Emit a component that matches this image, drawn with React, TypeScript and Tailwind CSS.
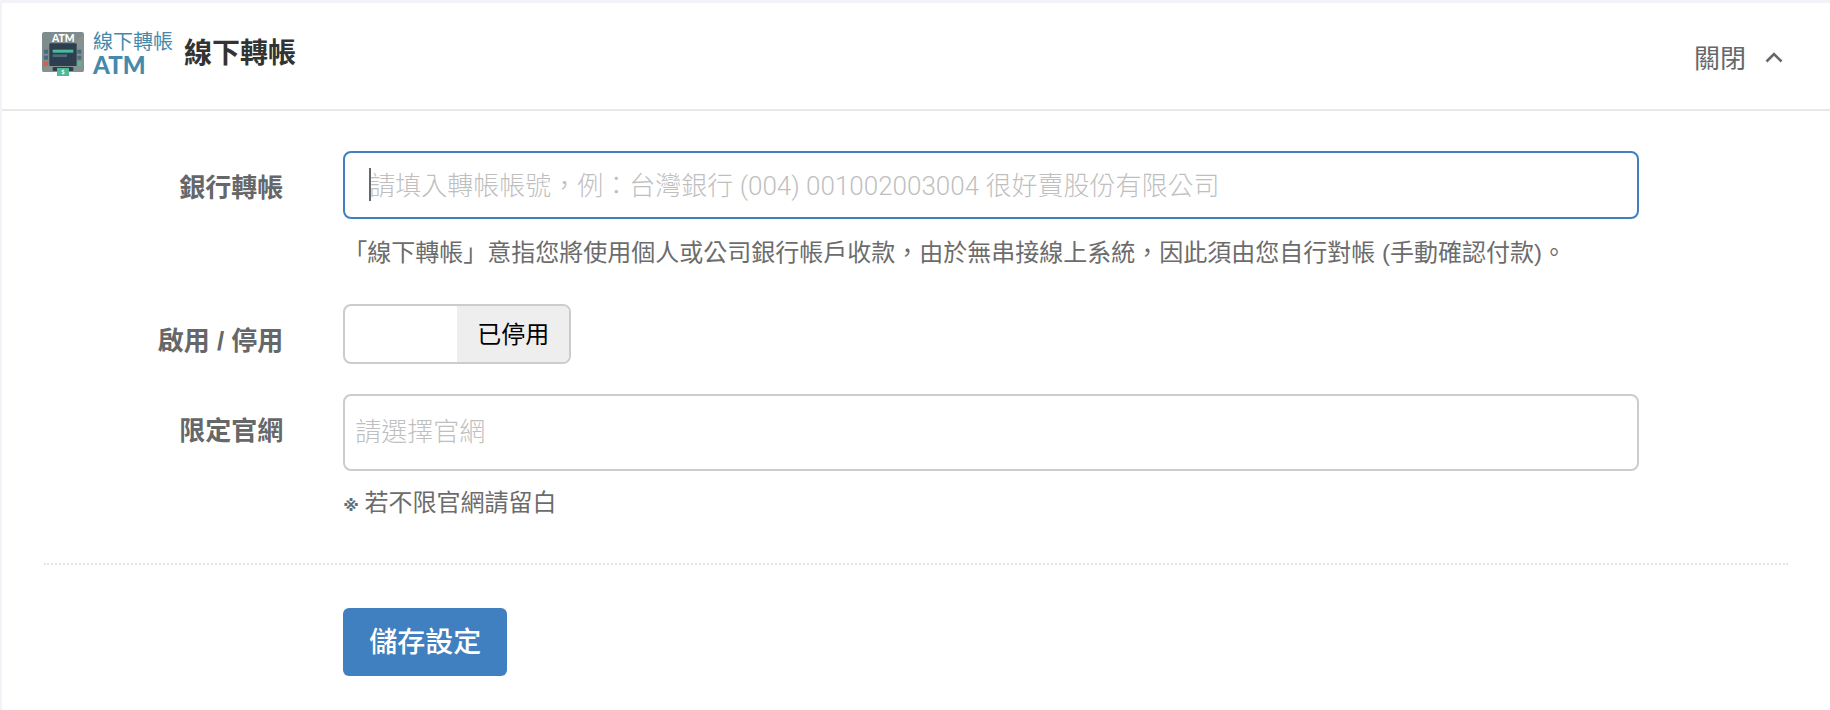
import { useState, type ReactNode } from 'react';

function AtmIcon() {
  return (
    <svg viewBox="0 0 126 132" className="h-11 w-[42px]" aria-hidden="true">
      <rect x="0" y="0" width="126" height="120" rx="7" fill="#7f8c8d" />
      <path d="M0 113 L126 7 V113 a7 7 0 0 1 -7 7 H7 a7 7 0 0 1 -7 -7Z" fill="#87918f" />
      <text
        x="64"
        y="29"
        textAnchor="middle"
        fontSize="31"
        fontWeight="900"
        fill="#ffffff"
        fontFamily="Lato, sans-serif"
      >
        ATM
      </text>
      <rect x="22" y="34" width="82" height="68" rx="3" fill="#2c3e50" />
      <rect x="32" y="53" width="62" height="9" fill="#4fba98" />
      <rect x="32" y="67" width="43" height="8" fill="#4c6d7c" />
      <rect x="6" y="53" width="12" height="12" fill="#496b7c" />
      <rect x="6" y="71" width="12" height="12" fill="#496b7c" />
      <rect x="6" y="89" width="12" height="12" fill="#d95b4e" />
      <rect x="106" y="53" width="12" height="12" fill="#496b7c" />
      <rect x="106" y="71" width="12" height="12" fill="#496b7c" />
      <rect x="106" y="89" width="12" height="12" fill="#4fba98" />
      <rect x="32" y="105" width="62" height="12" rx="3" fill="#2c3e50" />
      <rect x="45" y="108" width="36" height="24" fill="#4fba98" />
      <text
        x="63"
        y="126"
        textAnchor="middle"
        fontSize="17"
        fontWeight="700"
        fill="#ffffff"
        fontFamily="Lato, sans-serif"
      >
        $
      </text>
    </svg>
  );
}

function FormRow({ label, htmlFor, children }: {
  label?: string;
  htmlFor?: string;
  children: ReactNode;
}) {
  return (
    <div className="grid grid-cols-12 px-[10px]">
      <div className="col-span-2 pt-[19px] pr-[30px] text-right">
        {label && (
          <label htmlFor={htmlFor} className="text-[26px] leading-9 font-bold whitespace-nowrap">
            {label}
          </label>
        )}
      </div>
      <div className="col-span-9 px-[30px]">{children}</div>
    </div>
  );
}

export default function App() {
  const [enabled, setEnabled] = useState(false);
  const [open, setOpen] = useState(true);

  return (
    <div className="flex min-h-screen flex-col bg-[#f2f2f9] pt-[3px] pl-[2px] font-['Liberation_Sans','Noto_Sans_CJK_TC',sans-serif] text-[#666769]">
      <section className="flex-1 bg-white">
        <header className="flex items-start justify-between border-b-2 border-[#e8e8e8] pr-[47px] pb-[30px] pl-10">
          <div className="flex items-start pt-[29px]">
            <div className="flex gap-[9px]">
              <AtmIcon />
              <div className="text-[#468aab]">
                <div className="text-xl leading-5">線下轉帳</div>
                <div className="font-['Lato',sans-serif] text-2xl leading-[26px] font-black">ATM</div>
              </div>
            </div>
            <h1 className="pl-[11px] text-[28px] leading-11 font-bold text-[#333]">線下轉帳</h1>
          </div>
          <button
            type="button"
            aria-expanded={open}
            onClick={() => setOpen(!open)}
            className="flex items-center gap-[19px] pt-9 text-[26px] leading-10"
          >
            關閉
            <svg viewBox="0 0 18 12" className="mb-1 h-3 w-[18px]" fill="none" stroke="currentColor" strokeWidth="2.6" aria-hidden="true">
              <path d="M1.5 10.5 L9 3 L16.5 10.5" />
            </svg>
          </button>
        </header>

        {open && (
          <form onSubmit={(e) => e.preventDefault()} className="pt-10">
            <FormRow label="銀行轉帳" htmlFor="bank">
              <div className="relative">
                <input
                  id="bank"
                  type="text"
                  placeholder="請填入轉帳帳號，例：台灣銀行 (004) 001002003004 很好賣股份有限公司"
                  className="peer block h-[68px] w-full rounded-lg border-2 border-[#4080c0] px-6 pt-[2px] font-['Roboto','Noto_Sans_CJK_TC',sans-serif] text-[26px] font-light outline-none placeholder:text-[#bfbfbf]"
                />
                <span className="pointer-events-none absolute top-[17px] left-[26px] hidden h-[33px] w-[2px] bg-[#666769] peer-placeholder-shown:block" />
              </div>
              <p className="pt-4 text-2xl leading-9 text-[#6c6c6c]">
                「線下轉帳」意指您將使用個人或公司銀行帳戶收款，由於無串接線上系統，因此須由您自行對帳 (手動確認付款)。
              </p>
            </FormRow>

            <div className="pt-[33px]">
              <FormRow label="啟用 / 停用" htmlFor="enabled">
                <button
                  id="enabled"
                  type="button"
                  role="switch"
                  aria-checked={enabled}
                  onClick={() => setEnabled(!enabled)}
                  className="flex h-[60px] w-[228px] overflow-hidden rounded-lg border-2 border-[#ccc] text-2xl text-black"
                >
                  <span className="flex h-full flex-1 items-center justify-center pt-[2px]">{enabled ? '已啟用' : ''}</span>
                  <span className="flex h-full flex-1 items-center justify-center bg-[#eee] pt-[2px]">{enabled ? '' : '已停用'}</span>
                </button>
              </FormRow>
            </div>

            <div className="pt-[30px]">
              <FormRow label="限定官網" htmlFor="site">
                <input
                  id="site"
                  type="text"
                  placeholder="請選擇官網"
                  className="block h-[77px] w-full rounded-lg border-2 border-[#ccc] px-[10px] text-[26px] font-light outline-none placeholder:text-[#bfbfbf]"
                />
                <p className="pt-[14px] text-2xl leading-9 text-[#6c6c6c]">
                  <span className="font-['DejaVu_Sans',sans-serif] text-base font-bold">※ </span>若不限官網請留白
                </p>
              </FormRow>
            </div>

            <hr className="mx-[42px] mt-[42px] border-t-2 border-dotted border-[#e5e5e5]" />

            <div className="pt-[43px]">
              <FormRow>
                <button type="submit" className="h-[68px] rounded-md bg-[#4080c0] px-[26px] pt-[2px] text-[28px] font-medium text-white">
                  儲存設定
                </button>
              </FormRow>
            </div>
          </form>
        )}
      </section>
    </div>
  );
}
